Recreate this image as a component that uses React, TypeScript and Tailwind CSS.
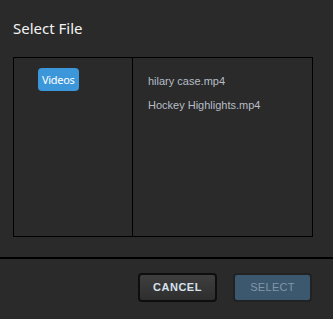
import React from "react";

export default function App() {
  return (
    <div className="w-[333px] h-[319px] bg-[#2a2a2a] flex flex-col overflow-hidden">
      <div className="pl-[13px] pt-[18px] h-[57px] text-[15px] leading-[20px] text-[#f2f2f2] font-['Noto_Sans',sans-serif]">
        Select File
      </div>
      <div className="mx-[13px] w-[300px] h-[180px] border border-black flex">
        <div className="w-[119px] border-r border-black flex items-start pt-[10px] pl-[24px]">
          <div className="h-[23px] px-[4px] rounded-[4px] bg-[#3b97d9] text-white text-[11px] tracking-[-0.3px] leading-[23px] font-['Noto_Sans',sans-serif]">
            Videos
          </div>
        </div>
        <div className="flex-1 pl-[15px] pt-[17px] flex flex-col gap-[11px] text-[11px] leading-[13px] text-[#b6bdc6] font-['Liberation_Sans',Arial,sans-serif]">
          <div>hilary case.mp4</div>
          <div>Hockey Highlights.mp4</div>
        </div>
      </div>
      <div className="mt-[20px] border-t-2 border-black flex-1 flex justify-end items-start pt-[14px] pr-[21px] gap-[16px]">
        <button className="w-[79px] h-[29px] rounded-[4px] border-2 border-[#0e0e0e] bg-gradient-to-b from-[#3f3f3f] to-[#2e2e2e] text-[11px] font-bold text-[#d6e2ee] tracking-[0.5px] font-['Liberation_Sans',Arial,sans-serif]">
          CANCEL
        </button>
        <button className="w-[79px] h-[29px] rounded-[4px] border-2 border-[#222] bg-[#3b586f] text-[11px] text-[#8396a6] tracking-[0.3px] font-['Liberation_Sans',Arial,sans-serif]">
          SELECT
        </button>
      </div>
    </div>
  );
}
